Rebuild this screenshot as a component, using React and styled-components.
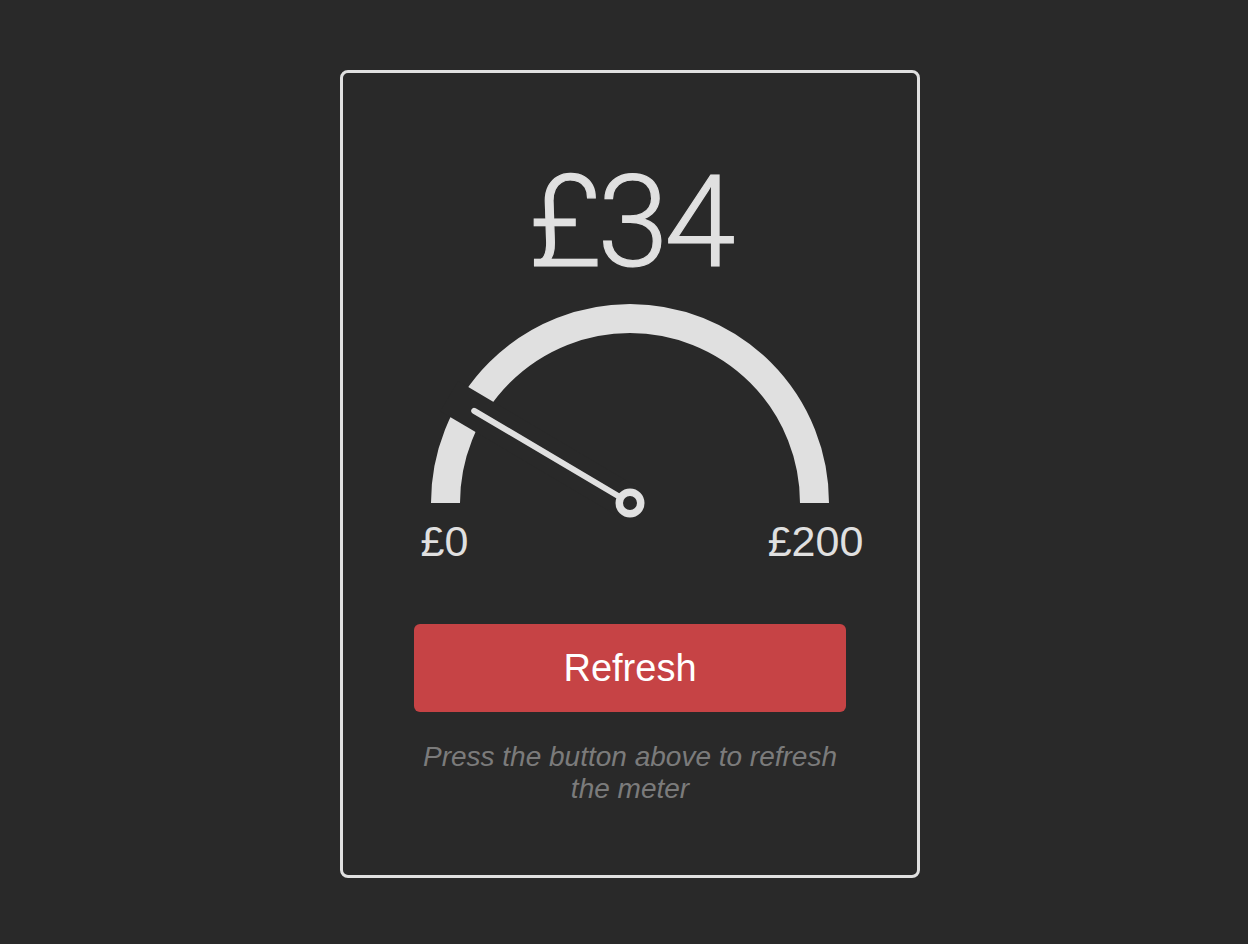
import React, { useState } from "react";
import styled, { createGlobalStyle } from "styled-components";

const GlobalStyle = createGlobalStyle`
  body {
    margin: 0;
    background: #292929;
    font-family: "Liberation Sans", Arial, Helvetica, sans-serif;
  }
`;

const Page = styled.main`
  min-height: 100vh;
  box-sizing: border-box;
  display: flex;
  justify-content: center;
  align-items: flex-start;
  padding: 70px 0 0 12px;
`;

const Card = styled.section`
  width: 580px;
  box-sizing: border-box;
  border: 3px solid #e0e0e0;
  border-radius: 8px;
  padding: 85px 0 70px;
  display: flex;
  flex-direction: column;
  align-items: center;
  color: #e0e0e0;
`;

const Amount = styled.h1`
  margin: 0;
  font-family: Roboto, "Liberation Sans", sans-serif;
  font-weight: 300;
  font-size: 128px;
  letter-spacing: -4px;
  line-height: 1;
  color: #e0e0e0;
  -webkit-text-stroke: 1.2px #e0e0e0;
`;

const Gauge = styled.svg`
  display: block;
  width: 400px;
  height: 214px;
  margin-top: 18px;
`;

const Scale = styled.div`
  width: 400px;
  display: flex;
  justify-content: space-between;
  margin-top: 2px;
`;

const Label = styled.span`
  width: 29px;
  display: flex;
  justify-content: center;
  white-space: nowrap;
  font-size: 43px;
  line-height: 1;
`;

const Button = styled.button`
  margin-top: 61px;
  width: 432px;
  height: 88px;
  border: none;
  border-radius: 6px;
  background: #c64345;
  color: #ffffff;
  font-family: "Liberation Sans", Arial, sans-serif;
  font-size: 38px;
  cursor: pointer;
`;

const Hint = styled.p`
  margin: 29px 0 0;
  width: 432px;
  text-align: center;
  font-style: italic;
  font-size: 28px;
  line-height: 32px;
  color: #7b7b7b;
`;

const BG = "#292929";
const FG = "#e0e0e0";

const Meter = ({ value, max }) => {
  const cx = 200;
  const cy = 199;
  const r = 184.5;
  const a = (value / max) * Math.PI;
  const dx = -Math.cos(a);
  const dy = -Math.sin(a);
  return (
    <Gauge viewBox="0 0 400 214">
      <path
        d={`M ${cx - r} ${cy} A ${r} ${r} 0 0 1 ${cx + r} ${cy}`}
        fill="none"
        stroke={FG}
        strokeWidth="29"
      />
      <line
        x1={cx}
        y1={cy}
        x2={cx + dx * 210}
        y2={cy + dy * 210}
        stroke={BG}
        strokeWidth="35"
      />
      <line
        x1={cx}
        y1={cy}
        x2={cx + dx * 181}
        y2={cy + dy * 181}
        stroke={FG}
        strokeWidth="6"
        strokeLinecap="round"
      />
      <circle cx={cx} cy={cy} r="10.75" fill={BG} stroke={FG} strokeWidth="7.5" />
    </Gauge>
  );
};

export default function App() {
  const [value, setValue] = useState(34);
  const max = 200;
  return (
    <>
      <GlobalStyle />
      <Page>
        <Card>
          <Amount>£{value}</Amount>
          <Meter value={value} max={max} />
          <Scale>
            <Label>£0</Label>
            <Label>£{max}</Label>
          </Scale>
          <Button onClick={() => setValue(Math.round(Math.random() * max))}>
            Refresh
          </Button>
          <Hint>Press the button above to refresh the meter</Hint>
        </Card>
      </Page>
    </>
  );
}
